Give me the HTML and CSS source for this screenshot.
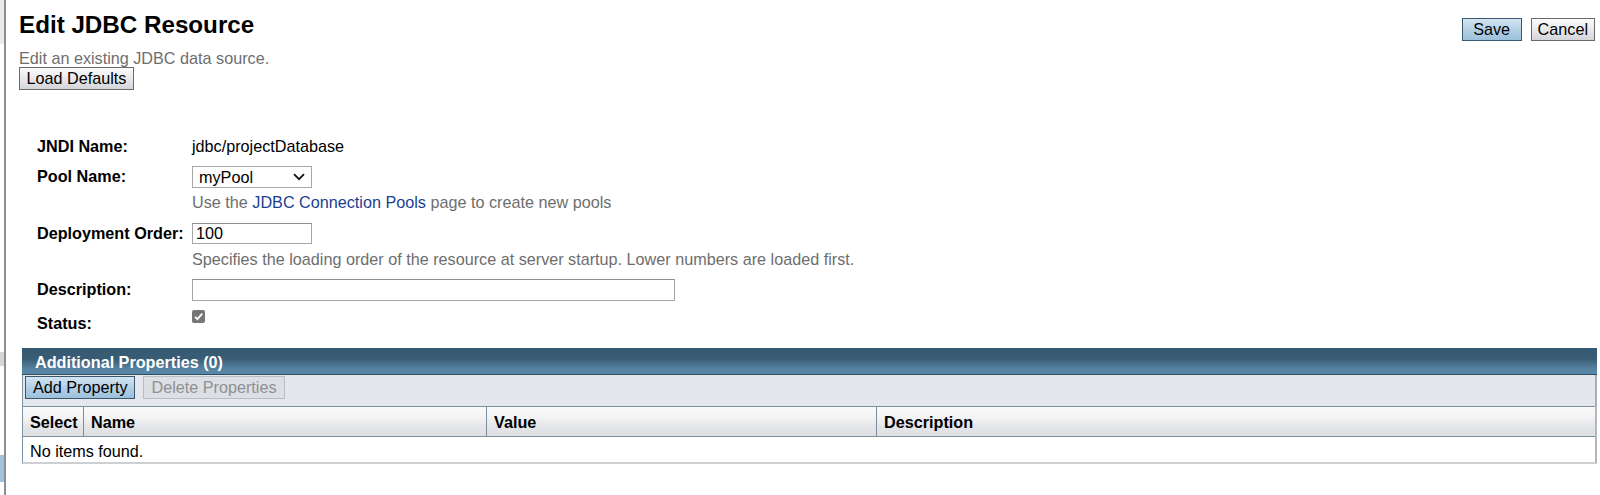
FILE: index.html
```html
<!DOCTYPE html>
<html lang="en">
<head>
<meta charset="utf-8">
<title>Edit JDBC Resource</title>
<link rel="stylesheet" href="styles.css">
</head>
<body>
<div class="rail"></div>
<main class="main">
  <div class="title-row">
    <h1 class="title">Edit JDBC Resource</h1>
    <div class="top-actions">
      <button class="btn btn-primary">Save</button>
      <button class="btn btn-secondary">Cancel</button>
    </div>
  </div>
  <p class="subtitle">Edit an existing JDBC data source.</p>
  <button class="btn btn-secondary btn-load">Load Defaults</button>

  <div class="form">
    <div class="row row-jndi">
      <div class="label">JNDI Name:</div>
      <div class="value">jdbc/projectDatabase</div>
    </div>
    <div class="row row-pool">
      <div class="label label-field">Pool Name:</div>
      <div class="value">
        <div class="select">
          <span class="select-text">myPool</span>
          <svg class="chev" width="12" height="8" viewBox="0 0 12 8"><path d="M1 1.2 L6 6.2 L11 1.2" fill="none" stroke="#111" stroke-width="1.8"/></svg>
        </div>
        <div class="help help-pool">Use the <a class="link" href="#">JDBC Connection Pools</a> page to create new pools</div>
      </div>
    </div>
    <div class="row row-order">
      <div class="label label-field">Deployment Order:</div>
      <div class="value">
        <div class="input input-short">100</div>
        <div class="help help-order">Specifies the loading order of the resource at server startup. Lower numbers are loaded first.</div>
      </div>
    </div>
    <div class="row row-desc">
      <div class="label label-field">Description:</div>
      <div class="value">
        <div class="input input-long"></div>
      </div>
    </div>
    <div class="row row-status">
      <div class="label label-status">Status:</div>
      <div class="value">
        <span class="checkbox"><svg width="13" height="13" viewBox="0 0 13 13"><path d="M3 6.8 L5.4 9.2 L10.2 3.6" fill="none" stroke="#fff" stroke-width="1.8"/></svg></span>
      </div>
    </div>
  </div>

  <section class="panel">
    <div class="panel-head">Additional Properties (0)</div>
    <div class="toolbar">
      <button class="btn btn-primary btn-tool">Add Property</button>
      <button class="btn btn-disabled btn-tool">Delete Properties</button>
    </div>
    <div class="table">
      <div class="thead">
        <div class="th th-select">Select</div>
        <div class="th th-name">Name</div>
        <div class="th th-value">Value</div>
        <div class="th th-desc">Description</div>
      </div>
      <div class="empty">No items found.</div>
    </div>
  </section>
</main>
</body>
</html>
```

FILE: styles.css
```css
html, body {
  margin: 0;
  padding: 0;
  background: #fff;
}
body {
  display: flex;
  width: 1600px;
  height: 495px;
  overflow: hidden;
  font-family: "Liberation Sans", Arial, sans-serif;
  font-size: 16.2px;
  color: #000;
}
.rail {
  width: 4px;
  flex: none;
  border-right: 2px solid #8e8e8e;
  background: linear-gradient(to bottom,
    #e8eaed 0, #e8eaed 44px,
    #fff 44px, #fff 352px,
    #d6d6d6 352px, #d6d6d6 366px,
    #fff 366px, #fff 455px,
    #a3c3dc 455px, #a3c3dc 482px,
    #fff 482px);
}
.main {
  flex: 1;
  padding: 11px 5px 0 13px;
  min-width: 0;
}
.title-row {
  display: flex;
  justify-content: space-between;
  align-items: flex-start;
}
.title {
  margin: 0;
  font-size: 24.2px;
  line-height: 28px;
  font-weight: bold;
}
.top-actions {
  display: flex;
  gap: 9px;
  margin-top: 7px;
}
.subtitle {
  margin: 8px 0 0;
  line-height: 18px;
  color: #6e6e6e;
}
.btn {
  font-family: "Liberation Sans", Arial, sans-serif;
  font-size: 16.2px;
  line-height: 21px;
  height: 23px;
  min-width: 60px;
  padding: 0 6px;
  margin: 0;
  border: 1px solid #6a6a6a;
  border-radius: 0;
  color: #000;
  cursor: default;
  box-sizing: border-box;
}
.btn-tool {
  padding: 0 7px;
}
.btn-primary {
  border-color: #3a5870;
  background: linear-gradient(to bottom, #d3e4f1 0%, #b7d2e7 45%, #9cc0dc 100%);
}
.btn-secondary {
  background: linear-gradient(to bottom, #fbfbfb 0%, #ebebee 45%, #d4d5da 100%);
}
.btn-disabled {
  border-color: #b9bcc0;
  background: #dcdfe3;
  color: #8f9194;
}
.btn-load {
  display: block;
  min-width: 0;
  width: 115px;
}

.form {
  margin: 47px 0 0 18px;
}
.row {
  display: flex;
  line-height: 18px;
}
.label {
  width: 155px;
  flex: none;
  font-weight: bold;
}
.label-field {
  padding-top: 1px;
}
.label-status {
  padding-top: 4px;
}
.row-pool { margin-top: 11px; }
.row-order { margin-top: 12px; }
.row-desc { margin-top: 11px; }
.row-status { margin-top: 9px; }

.select {
  width: 120px;
  height: 22px;
  box-sizing: border-box;
  border: 1px solid #a7a7a7;
  display: flex;
  align-items: center;
  justify-content: space-between;
  padding: 0 6px 0 6px;
  line-height: 20px;
}
.chev {
  display: block;
}
.help {
  color: #6e6e6e;
  line-height: 18px;
}
.help-pool { margin-top: 5px; }
.help-order { margin-top: 6px; }
.link {
  color: #1a3f93;
  text-decoration: none;
}
.input {
  box-sizing: border-box;
  border: 1px solid #a5a5a5;
  border-top-color: #8f8f8f;
  padding: 0 3px;
  line-height: 19px;
}
.input-short {
  width: 120px;
  height: 21px;
}
.input-long {
  width: 483px;
  height: 22px;
}
.checkbox {
  display: block;
  width: 13px;
  height: 13px;
  border-radius: 2px;
  background: #767676;
}
.checkbox svg { display: block; }

.panel {
  margin: 16px -2px 0 3px;
}
.panel-head {
  box-sizing: border-box;
  height: 27px;
  line-height: 24px;
  padding-top: 2px;
  padding-left: 13px;
  color: #fff;
  font-weight: bold;
  border-bottom: 1px solid #2f4d62;
  background: linear-gradient(to bottom, #365a71 0%, #385c73 40%, #5682a2 80%, #5a87a8 100%);
}
.toolbar {
  display: flex;
  gap: 8px;
  height: 31px;
  padding: 1px 0 0 2px;
  box-sizing: border-box;
  background: #e4e8ed;
  border-left: 1px solid #7f93a0;
  border-right: 2px solid #a9afb3;
}
.table {
  border-left: 1px solid #7f93a0;
  border-right: 2px solid #b4b8bb;
  border-bottom: 2px solid #cdd0d3;
}
.thead {
  display: grid;
  grid-template-columns: 61px 403px 390px 1fr;
  height: 31px;
  box-sizing: border-box;
  border-top: 1px solid #7b8f9b;
  border-bottom: 1px solid #7b8f9b;
  background: linear-gradient(to bottom, #fafafa 0%, #f4f4f5 35%, #e3e4e8 70%, #dfe0e4 100%);
}
.th {
  font-weight: bold;
  padding-left: 7px;
  padding-top: 1px;
  line-height: 28px;
  border-right: 1px solid #7b8f9b;
}
.th-desc {
  border-right: none;
}
.empty {
  height: 25px;
  box-sizing: border-box;
  padding-top: 3px;
  line-height: 22px;
  padding-left: 7px;
  background: #fff;
}
```
